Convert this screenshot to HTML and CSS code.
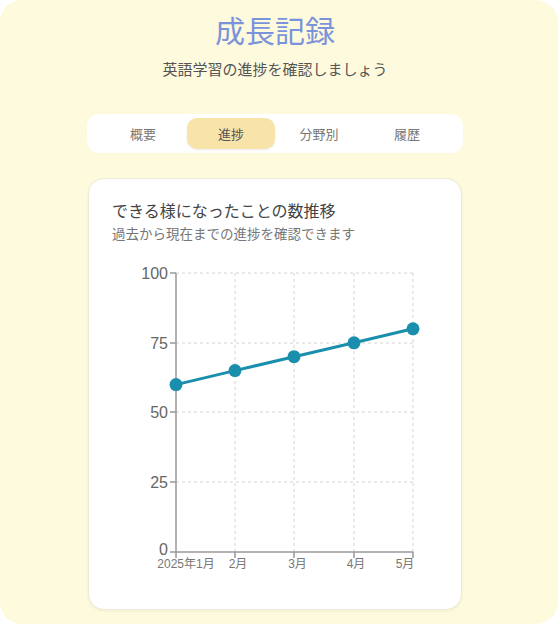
FILE: index.html
```html
<!DOCTYPE html>
<html lang="ja">
<head>
    <meta charset="UTF-8">
    <meta name="viewport" content="width=device-width, initial-scale=1.0">
    <title>成長記録</title>
    <link rel="stylesheet" href="styles.css">
</head>
<body>
    <div class="page">
        <h1>成長記録</h1>
        <p class="lead">英語学習の進捗を確認しましょう</p>

        <div class="tabs">
            <div class="tab">概要</div>
            <div class="tab active">進捗</div>
            <div class="tab">分野別</div>
            <div class="tab">履歴</div>
        </div>

        <div class="card">
            <div class="card-title">できる様になったことの数推移</div>
            <div class="card-sub">過去から現在までの進捗を確認できます</div>

            <svg class="chart" width="326" height="320" viewBox="0 0 326 320">
                <!-- grid -->
                <g class="grid">
                    <line x1="64" y1="12" x2="301" y2="12"/>
                    <line x1="64" y1="82" x2="301" y2="82"/>
                    <line x1="64" y1="151" x2="301" y2="151"/>
                    <line x1="64" y1="221" x2="301" y2="221"/>
                    <line x1="123" y1="12" x2="123" y2="291"/>
                    <line x1="182" y1="12" x2="182" y2="291"/>
                    <line x1="242" y1="12" x2="242" y2="291"/>
                    <line x1="301" y1="12" x2="301" y2="291"/>
                </g>
                <!-- axes -->
                <g class="axis">
                    <line x1="64" y1="12" x2="64" y2="291"/>
                    <line x1="64" y1="291" x2="301" y2="291"/>
                    <line x1="58" y1="12" x2="64" y2="12"/>
                    <line x1="58" y1="82" x2="64" y2="82"/>
                    <line x1="58" y1="151" x2="64" y2="151"/>
                    <line x1="58" y1="221" x2="64" y2="221"/>
                    <line x1="58" y1="291" x2="64" y2="291"/>
                    <line x1="64" y1="291" x2="64" y2="297"/>
                    <line x1="123" y1="291" x2="123" y2="297"/>
                    <line x1="182" y1="291" x2="182" y2="297"/>
                    <line x1="242" y1="291" x2="242" y2="297"/>
                    <line x1="301" y1="291" x2="301" y2="297"/>
                </g>
                <g class="ylabels">
                    <text x="56" y="18">100</text>
                    <text x="56" y="88">75</text>
                    <text x="56" y="157">50</text>
                    <text x="56" y="227">25</text>
                    <text x="56" y="294">0</text>
                </g>
                <g class="xlabels">
                    <text x="74" y="307">2025年1月</text>
                    <text x="126" y="307">2月</text>
                    <text x="185.5" y="307">3月</text>
                    <text x="244" y="307">4月</text>
                    <text x="293" y="307">5月</text>
                </g>
                <polyline class="line" points="64,123.6 123,109.6 182,95.7 242,81.8 301,67.8"/>
                <g class="dots">
                    <circle cx="64" cy="123.6" r="6.5"/>
                    <circle cx="123" cy="109.6" r="6.5"/>
                    <circle cx="182" cy="95.7" r="6.5"/>
                    <circle cx="242" cy="81.8" r="6.5"/>
                    <circle cx="301" cy="67.8" r="6.5"/>
                </g>
            </svg>
        </div>
    </div>
</body>
</html>
```

FILE: styles.css
```css
body {
    margin: 0;
    background-color: #ffffff;
    font-family: "Noto Sans CJK JP", "Noto Sans", sans-serif;
    color: #444;
}
.page {
    height: 624px;
    box-sizing: border-box;
    padding: 11px 8px 0 0;
    background-color: #FEFADD;
    border-radius: 22px;
    overflow: hidden;
}
h1 {
    margin: 0;
    text-align: center;
    font-size: 30px;
    line-height: 36px;
    font-weight: 400;
    color: #7B93DB;
}
.lead {
    margin: 12px 0 0;
    text-align: center;
    font-size: 15px;
    line-height: 20px;
    color: #555;
}
.tabs {
    width: 376px;
    box-sizing: border-box;
    margin: 35px auto 0;
    padding: 4px 12px;
    display: flex;
    background-color: #ffffff;
    border-radius: 12px;
}
.tab {
    flex: 1;
    height: 31px;
    display: flex;
    align-items: center;
    justify-content: center;
    font-size: 13px;
    color: #777;
    border-radius: 10px;
}
.tab.active {
    background-color: #F8E3A9;
    color: #555;
    box-shadow: 0 1px 2px rgba(0, 0, 0, 0.08);
}
.card {
    width: 374px;
    box-sizing: border-box;
    margin: 25px auto 0;
    padding: 20px 23px 28px;
    background-color: #ffffff;
    border: 1px solid #EEEAD8;
    border-radius: 16px;
    box-shadow: 0 1px 3px rgba(0, 0, 0, 0.06);
}
.card-title {
    font-size: 16px;
    line-height: 22px;
    color: #444;
}
.card-sub {
    margin-top: 2px;
    font-size: 13.5px;
    line-height: 20px;
    color: #777;
}
.chart {
    display: block;
    margin-top: 18px;
    overflow: visible;
}
.grid line {
    stroke: #d4d4d4;
    stroke-width: 1;
    stroke-dasharray: 3 3;
}
.axis line {
    stroke: #999;
    stroke-width: 1.5;
}
.ylabels text {
    font-family: "Liberation Sans", "Noto Sans CJK JP", sans-serif;
    font-size: 16px;
    fill: #666;
    text-anchor: end;
}
.xlabels text {
    font-family: "Liberation Sans", "Noto Sans CJK JP", sans-serif;
    font-size: 12px;
    fill: #777;
    text-anchor: middle;
}
.line {
    fill: none;
    stroke: #1A8FAD;
    stroke-width: 3;
}
.dots circle {
    fill: #1A8FAD;
}
```
